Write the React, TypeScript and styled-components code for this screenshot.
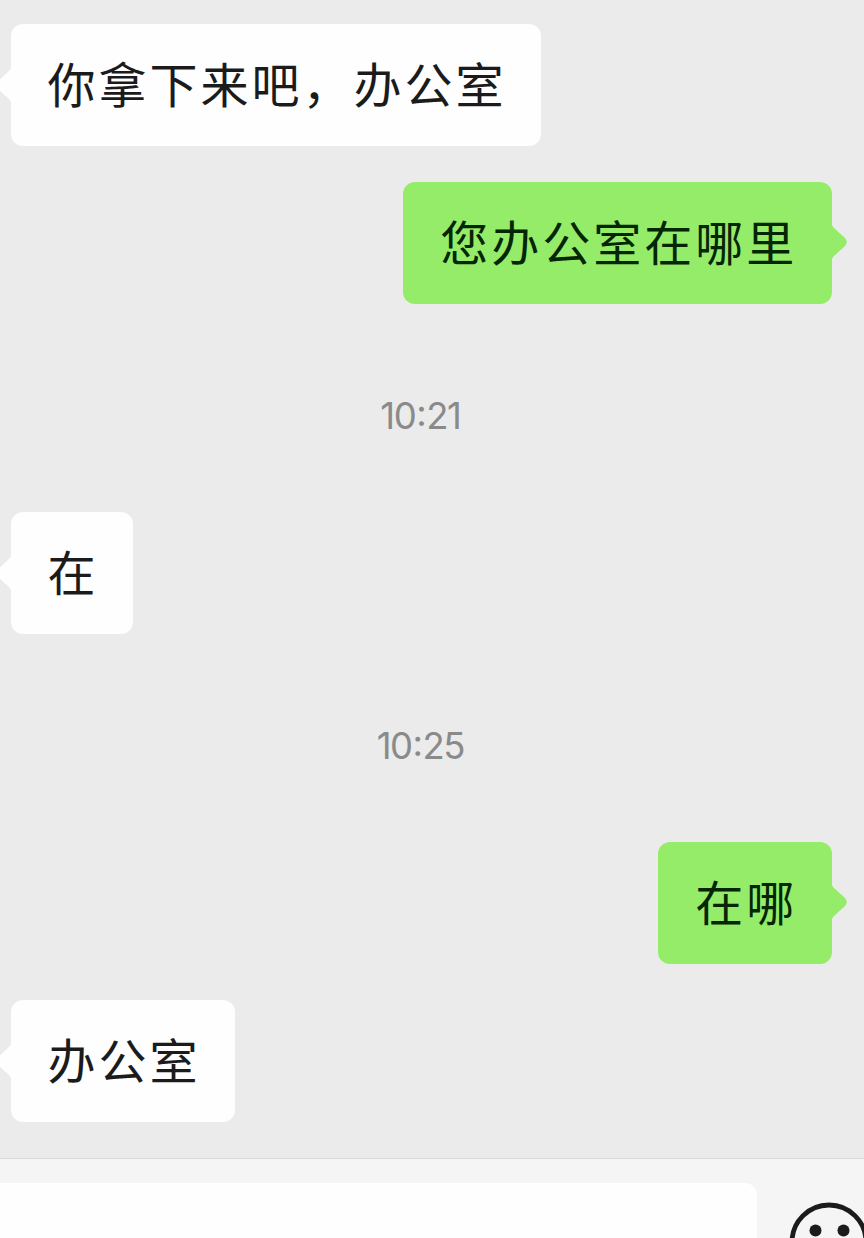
import React from "react";
import styled, { createGlobalStyle, css } from "styled-components";

const GlobalStyle = createGlobalStyle`
  * { box-sizing: border-box; }
  body { margin: 0; background: #ebebeb; overflow: hidden; }
`;

const Screen = styled.main`
  display: flex;
  flex-direction: column;
  width: 864px;
  height: 1238px;
  overflow: hidden;
  background: #ebebeb;
  font-family: "Noto Sans CJK SC", sans-serif;
`;

const Messages = styled.section`
  display: flex;
  flex-direction: column;
  flex: none;
  height: 1158px;
  padding: 24.4px 32px 0 10.6px;
`;

const Bubble = styled.div<{ $mine?: boolean }>`
  position: relative;
  flex: none;
  align-self: ${(p) => (p.$mine ? "flex-end" : "flex-start")};
  height: 122px;
  padding: 0 34.8px 0 37px;
  border-radius: 12px;
  background: ${(p) => (p.$mine ? "#95ec69" : "#fefefe")};
  color: ${(p) => (p.$mine ? "#052605" : "#1b1b1b")};
  font-size: 48px;
  line-height: 117px;
  letter-spacing: 3px;
  white-space: nowrap;
  & + & { margin-top: 35.7px; }
`;

const Tail = styled.svg<{ $mine?: boolean }>`
  position: absolute;
  top: 43px;
  width: 16px;
  height: 34px;
  fill: ${(p) => (p.$mine ? "#95ec69" : "#fefefe")};
  ${(p) =>
    p.$mine
      ? css`right: -15px;`
      : css`left: -15px; top: 44px; transform: scaleX(-1);`}
`;

const Time = styled.time`
  display: flex;
  justify-content: center;
  align-items: center;
  flex: none;
  height: 208.2px;
  padding: 16px 2px 0 0;
  color: #8a8a8a;
  font-family: Inter, sans-serif;
  font-size: 36.5px;
  line-height: 44px;
  letter-spacing: -1.5px;
`;

const Colon = styled.span`
  margin: 0 1px;
  transform: translateY(-3px);
`;

const InputBar = styled.footer`
  display: flex;
  flex: none;
  height: 130px;
  padding-top: 24px;
  border-top: 1px solid #dadada;
  background: #f5f5f5;
`;

const InputField = styled.div`
  flex: none;
  width: 757px;
  height: 106px;
  border-radius: 0 12px 12px 0;
  background: #fefefe;
`;

const Smiley = styled.svg`
  flex: none;
  width: 80px;
  height: 80px;
  margin: 19px 0 0 32px;
`;

function Message({ text, mine }: { text: string; mine?: boolean }) {
  return (
    <Bubble $mine={mine}>
      {text}
      <Tail $mine={mine} viewBox="0 0 16 34">
        <path d="M0 -2 Q1 1 3 3 L14 13 Q17.5 17 14 21 L3 31 Q1 33 0 36Z" />
      </Tail>
    </Bubble>
  );
}

function Timestamp({ hour, minute }: { hour: string; minute: string }) {
  return (
    <Time>
      {hour}
      <Colon>:</Colon>
      {minute}
    </Time>
  );
}

export default function App() {
  return (
    <>
      <GlobalStyle />
      <Screen>
        <Messages>
          <Message text="你拿下来吧，办公室" />
          <Message text="您办公室在哪里" mine />
          <Timestamp hour="10" minute="21" />
          <Message text="在" />
          <Timestamp hour="10" minute="25" />
          <Message text="在哪" mine />
          <Message text="办公室" />
        </Messages>
        <InputBar>
          <InputField />
          <Smiley viewBox="0 0 80 80">
            <circle cx="40" cy="40" r="37" fill="none" stroke="#1b1b1b" strokeWidth="4.8" />
            <circle cx="26.5" cy="28.5" r="6" fill="#1b1b1b" />
            <circle cx="54.5" cy="28.5" r="6" fill="#1b1b1b" />
            <path d="M21 46a19 19 0 0 0 38 0z" fill="none" stroke="#1b1b1b" strokeWidth="4.8" />
          </Smiley>
        </InputBar>
      </Screen>
    </>
  );
}
